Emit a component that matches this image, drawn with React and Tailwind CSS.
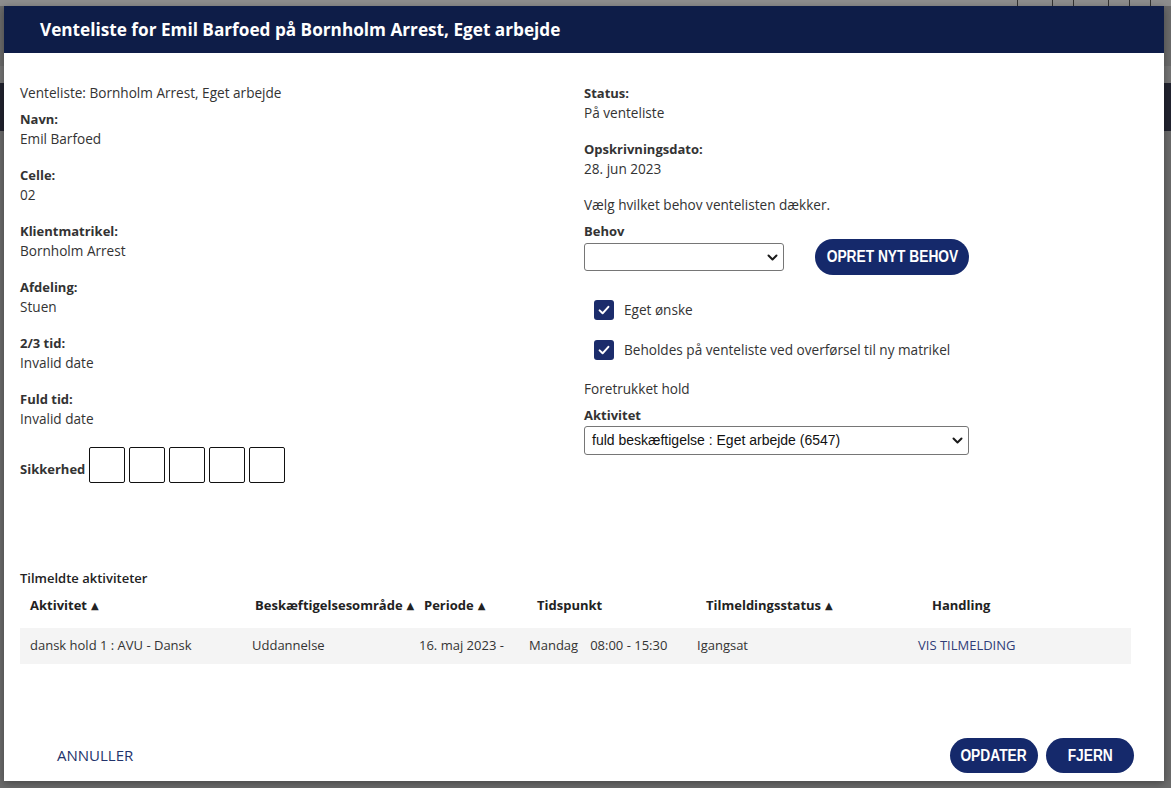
import React from "react";

const BODY_FONT = { fontFamily: "'Open Sans', 'Noto Sans', 'DejaVu Sans', sans-serif" };
const COND_FONT = { fontFamily: "'Liberation Sans', Arial, sans-serif" };
const ARIAL = { fontFamily: "'Liberation Sans', Arial, sans-serif" };

function Field({ label, value }) {
  return (
    <div className="mb-[16px]">
      <div className="font-bold leading-[20px] text-[13px]">{label}</div>
      <div className="leading-[20px]">{value}</div>
    </div>
  );
}

function Chevron() {
  return (
    <svg width="11" height="7" viewBox="0 0 11 7" className="shrink-0">
      <path d="M1.5 1.5 L5.5 5.5 L9.5 1.5" stroke="#1a1a1a" strokeWidth="2" fill="none" strokeLinecap="round" strokeLinejoin="round" />
    </svg>
  );
}

function Check({ label }) {
  return (
    <div className="flex items-center h-[20px] pl-[10px] gap-[10px]">
      <span className="w-[20px] h-[20px] rounded-[3px] bg-[#1b2c6b] flex items-center justify-center">
        <svg width="14" height="14" viewBox="0 0 14 14">
          <path d="M2.6 7.4 L5.6 10.3 L11.4 3.8" stroke="white" strokeWidth="2" fill="none" strokeLinecap="round" strokeLinejoin="round" />
        </svg>
      </span>
      <span className="leading-[20px]">{label}</span>
    </div>
  );
}

function Pill({ children, className }) {
  return (
    <button className={"rounded-full bg-[#15296b] text-white flex items-center justify-center " + className}>
      <span className="inline-block font-bold text-[16px] leading-none scale-x-[0.86] whitespace-nowrap" style={COND_FONT}>
        {children}
      </span>
    </button>
  );
}

function Arrow() {
  return (
    <span className="text-[10px] ml-[4px] relative top-[-1px]" style={{ fontFamily: "'DejaVu Sans', sans-serif" }}>
      ▲
    </span>
  );
}

export default function App() {
  return (
    <div className="relative w-full h-[788px] bg-[#6b6b6b] overflow-hidden" style={BODY_FONT}>
      {/* underlying page glimpses */}
      <div className="h-[6px] bg-[#8e8e8e] flex justify-end">
        <div className="flex h-[6px]">
          <div className="w-[35px] border-l border-[#333]" />
          <div className="w-[21px] border-l border-[#333]" />
          <div className="w-[35px] border-l border-[#333]" />
          <div className="w-[21px] border-l border-[#333]" />
          <div className="w-[21px] border-l border-[#333]" />
          <div className="w-[21px] border-l border-[#333]" />
        </div>
      </div>
      <div className="h-[60px]" />
      <div className="h-[17px] bg-[#757575]" />
      <div className="h-[48px] bg-[#22232f]" />

      {/* modal */}
      <div className="absolute left-[4px] top-[6px] w-[1160px] h-[775px] bg-white flex flex-col shadow-[0_2px_8px_rgba(0,0,0,0.35)] text-[13.6px] text-[#333]">
        <div className="h-[47px] bg-[#0e1d48] flex items-center pl-[36px]">
          <h1 className="text-white font-bold text-[17.2px] leading-none">
            Venteliste for Emil Barfoed på Bornholm Arrest, Eget arbejde
          </h1>
        </div>

        <div className="px-[16px] pt-[30px]">
          <div className="grid grid-cols-[564px_1fr]">
            {/* left column */}
            <div>
              <div className="leading-[20px] mb-[6px]">Venteliste: Bornholm Arrest, Eget arbejde</div>
              <Field label="Navn:" value="Emil Barfoed" />
              <Field label="Celle:" value="02" />
              <Field label="Klientmatrikel:" value="Bornholm Arrest" />
              <Field label="Afdeling:" value="Stuen" />
              <Field label="2/3 tid:" value="Invalid date" />
              <div className="mb-[18px]">
                <div className="font-bold leading-[20px] text-[13px]">Fuld tid:</div>
                <div className="leading-[20px]">Invalid date</div>
              </div>
              <div className="flex items-end">
                <span className="font-bold leading-[20px] text-[13px] pb-[4px] mr-[4px]">Sikkerhed</span>
                <div className="flex gap-[4px]">
                  <div className="w-[36px] h-[36px] border border-[#111] rounded-[2px]" />
                  <div className="w-[36px] h-[36px] border border-[#111] rounded-[2px]" />
                  <div className="w-[36px] h-[36px] border border-[#111] rounded-[2px]" />
                  <div className="w-[36px] h-[36px] border border-[#111] rounded-[2px]" />
                  <div className="w-[36px] h-[36px] border border-[#111] rounded-[2px]" />
                </div>
              </div>
            </div>

            {/* right column */}
            <div>
              <Field label="Status:" value="På venteliste" />
              <Field label="Opskrivningsdato:" value="28. jun 2023" />
              <div className="leading-[20px] mt-[16px]">Vælg hvilket behov ventelisten dækker.</div>
              <div className="font-bold leading-[20px] text-[13px] mt-[6px]">Behov</div>
              <div className="flex items-center gap-[31px] mt-[-2px] h-[36px]">
                <div className="w-[200px] h-[28px] border border-[#767676] rounded-[3px] flex items-center justify-end pr-[5px]">
                  <Chevron />
                </div>
                <Pill className="w-[154px] h-[36px]">OPRET NYT BEHOV</Pill>
              </div>
              <div className="mt-[25px] flex flex-col gap-[20px]">
                <Check label="Eget ønske" />
                <Check label="Beholdes på venteliste ved overførsel til ny matrikel" />
              </div>
              <div className="leading-[20px] mt-[19px]">Foretrukket hold</div>
              <div className="font-bold leading-[20px] text-[13px] mt-[6px]">Aktivitet</div>
              <div className="mt-[1px] w-[385px] h-[29px] border border-[#767676] rounded-[3px] flex items-center justify-between pl-[7px] pr-[5px]">
                <span className="text-[14px] text-[#111]" style={ARIAL}>fuld beskæftigelse : Eget arbejde (6547)</span>
                <Chevron />
              </div>
            </div>
          </div>

          {/* table */}
          <div className="mt-[85px] w-[1111px]">
            <div className="leading-[20px] font-semibold text-[13px] text-[#222]">Tilmeldte aktiviteter</div>
            <div className="mt-[8px] h-[20px] flex items-center font-bold text-[13px] text-[#222] pl-[10px]">
              <span className="w-[225px]">Aktivitet<Arrow /></span>
              <span className="w-[169px] whitespace-nowrap">Beskæftigelsesområde<Arrow /></span>
              <span className="w-[113px]">Periode<Arrow /></span>
              <span className="w-[169px]">Tidspunkt</span>
              <span className="w-[226px]">Tilmeldingsstatus<Arrow /></span>
              <span>Handling</span>
            </div>
            <div className="mt-[12px] h-[36px] bg-[#f4f4f4] flex items-center pl-[10px] text-[13px]">
              <span className="w-[222px]">dansk hold 1 : AVU - Dansk</span>
              <span className="w-[167px]">Uddannelse</span>
              <span className="w-[110px]">16. maj 2023 -</span>
              <span className="w-[168px]">
                Mandag<span className="ml-[12px]">08:00 - 15:30</span>
              </span>
              <span className="w-[221px]">Igangsat</span>
              <span className="text-[#2f3d78]">VIS TILMELDING</span>
            </div>
          </div>
        </div>

        {/* footer */}
        <div className="mt-auto mb-[8px] h-[35px] flex items-center justify-between pl-[53px] pr-[30px]">
          <span className="text-[15px] text-[#23336b]">ANNULLER</span>
          <div className="flex gap-[8px]">
            <Pill className="w-[88px] h-[35px]">OPDATER</Pill>
            <Pill className="w-[88px] h-[35px]">FJERN</Pill>
          </div>
        </div>
      </div>
    </div>
  );
}
